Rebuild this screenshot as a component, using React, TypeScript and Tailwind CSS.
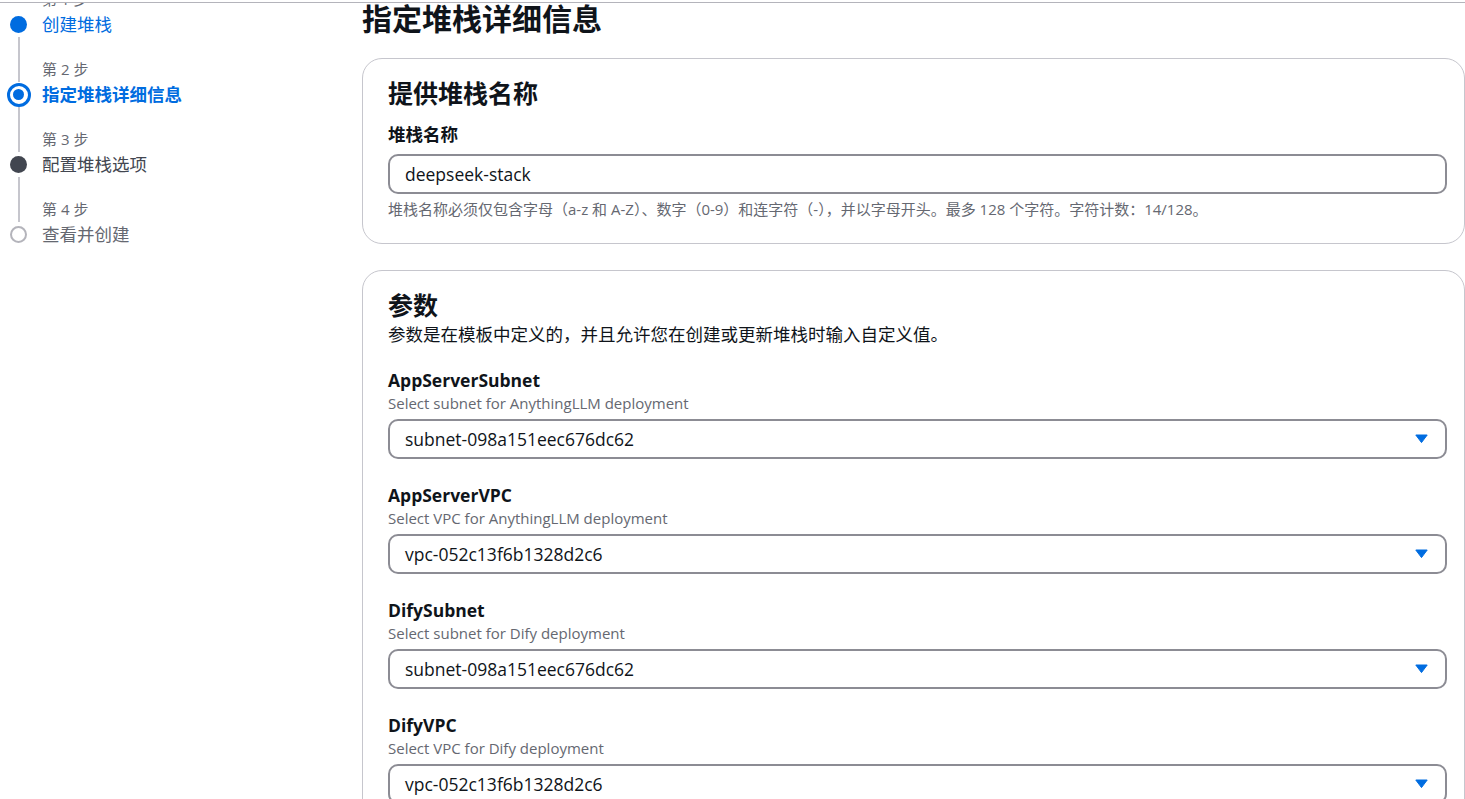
import React from "react";

const FONT = '"Open Sans","Noto Sans CJK SC",sans-serif';

type StepState = "done" | "current" | "next" | "later";

function Indicator({ state }: { state: StepState }) {
  if (state === "done")
    return <div className="h-[17px] w-[17px] shrink-0 rounded-full bg-[#006ce0]" />;
  if (state === "current")
    return (
      <div className="flex h-[24px] w-[24px] shrink-0 items-center justify-center rounded-full border-[3px] border-[#006ce0] bg-white">
        <div className="h-[11px] w-[11px] rounded-full bg-[#006ce0]" />
      </div>
    );
  if (state === "next")
    return <div className="h-[17px] w-[17px] shrink-0 rounded-full bg-[#424650]" />;
  return <div className="h-[17px] w-[17px] shrink-0 rounded-full border-2 border-[#b4b4bb] bg-white" />;
}

function Step({
  n,
  title,
  state,
  first,
  last,
}: {
  n: number;
  title: string;
  state: StepState;
  first?: boolean;
  last?: boolean;
}) {
  const titleCls =
    state === "done"
      ? "text-[#006ce0]"
      : state === "current"
      ? "text-[#006ce0] font-bold"
      : state === "next"
      ? "text-[#424650]"
      : "text-[#656871]";
  return (
    <div className="flex flex-col">
      <div className="flex h-[25px]">
        <div className="flex w-[37px] justify-center">
          {!first && <div className="h-full w-[2px] bg-[#c6c6cd]" />}
        </div>
        <div className="ml-[5px] text-[15px] leading-[25px] text-[#656871]">第 {n} 步</div>
      </div>
      <div className="flex h-[45px]">
        <div className="flex w-[37px] flex-col items-center">
          <div className="flex h-[25px] items-center justify-center">
            <Indicator state={state} />
          </div>
          {!last && <div className="w-[2px] flex-1 bg-[#c6c6cd]" />}
        </div>
        <div className={`ml-[5px] text-[17.5px] leading-[25px] ${titleCls}`}>{title}</div>
      </div>
    </div>
  );
}

function Caret() {
  return (
    <svg width="13" height="10" viewBox="0 0 13 10" className="shrink-0">
      <path d="M0.8 1 L12.2 1 L6.5 8.6 Z" fill="#006ce0" stroke="#006ce0" strokeWidth="1" strokeLinejoin="round" />
    </svg>
  );
}

function SelectField({ label, desc, value }: { label: string; desc: string; value: string }) {
  return (
    <div className="mb-[24px] flex flex-col">
      <div className="text-[17.5px] font-bold leading-[25px] text-[#0f141a]">{label}</div>
      <div className="text-[15px] leading-[20px] text-[#656871]">{desc}</div>
      <div className="mt-[6px] flex h-[40px] items-center justify-between rounded-[10px] border-2 border-[#8c8c94] bg-white pl-[15px] pr-[17px]">
        <span className="text-[17.5px] text-[#0f141a]">{value}</span>
        <Caret />
      </div>
    </div>
  );
}

export default function App() {
  return (
    <div className="relative h-[799px] w-full overflow-hidden bg-white" style={{ fontFamily: FONT }}>
      <div className="absolute left-0 right-0 top-0 z-10 h-[3px] border-b border-[#b4b4bb] bg-white" />
      <div className="flex">
        <aside className="mt-[-13px] w-[362px] shrink-0">
          <Step n={1} title="创建堆栈" state="done" first />
          <Step n={2} title="指定堆栈详细信息" state="current" />
          <Step n={3} title="配置堆栈选项" state="next" />
          <Step n={4} title="查看并创建" state="later" last />
        </aside>
        <main className="flex min-w-0 flex-1 flex-col pt-[1px]">
          <h1 className="text-[30px] font-bold leading-[36px] text-[#0f141a]">指定堆栈详细信息</h1>
          <section className="mt-[21px] rounded-[20px] border border-[#c6c6cd] pb-[24px] pl-[25px] pr-[17px] pt-[19px]">
            <h2 className="text-[25px] font-bold leading-[30px] text-[#0f141a]">提供堆栈名称</h2>
            <div className="mt-[14px] text-[17.5px] font-bold leading-[25px] text-[#0f141a]">堆栈名称</div>
            <div className="mt-[7px] flex h-[40px] items-center rounded-[10px] border-2 border-[#8c8c94] pl-[15px]">
              <span className="text-[17.5px] text-[#0f141a]">deepseek-stack</span>
            </div>
            <div className="mt-[5px] text-[15px] leading-[20px] text-[#656871]">
              堆栈名称必须仅包含字母（a-z 和 A-Z）、数字（0-9）和连字符（-），并以字母开头。最多 128 个字符。字符计数：14/128。
            </div>
          </section>
          <section className="mt-[26px] rounded-[20px] border border-[#c6c6cd] pl-[25px] pr-[17px] pt-[19px]">
            <h2 className="text-[25px] font-bold leading-[30px] text-[#0f141a]">参数</h2>
            <div className="mt-[2px] text-[17.5px] leading-[25px] text-[#0f141a]">
              参数是在模板中定义的，并且允许您在创建或更新堆栈时输入自定义值。
            </div>
            <div className="mt-[21px] flex flex-col">
              <SelectField label="AppServerSubnet" desc="Select subnet for AnythingLLM deployment" value="subnet-098a151eec676dc62" />
              <SelectField label="AppServerVPC" desc="Select VPC for AnythingLLM deployment" value="vpc-052c13f6b1328d2c6" />
              <SelectField label="DifySubnet" desc="Select subnet for Dify deployment" value="subnet-098a151eec676dc62" />
              <SelectField label="DifyVPC" desc="Select VPC for Dify deployment" value="vpc-052c13f6b1328d2c6" />
            </div>
          </section>
        </main>
      </div>
    </div>
  );
}
